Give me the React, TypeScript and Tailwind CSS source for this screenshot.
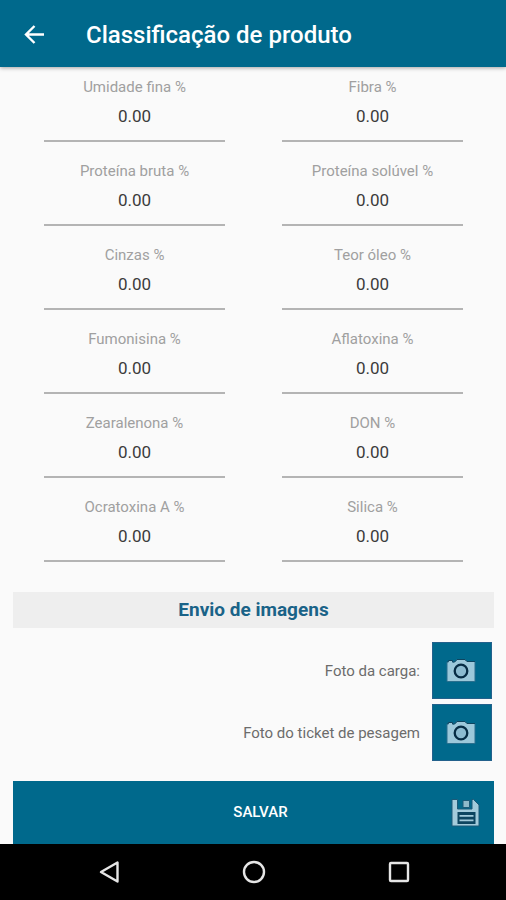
const fields = [
  { id: 'umidade', label: 'Umidade fina %' },
  { id: 'fibra', label: 'Fibra %' },
  { id: 'proteina-bruta', label: 'Proteína bruta %' },
  { id: 'proteina-soluvel', label: 'Proteína solúvel %' },
  { id: 'cinzas', label: 'Cinzas %' },
  { id: 'oleo', label: 'Teor óleo %' },
  { id: 'fumonisina', label: 'Fumonisina %' },
  { id: 'aflatoxina', label: 'Aflatoxina %' },
  { id: 'zearalenona', label: 'Zearalenona %' },
  { id: 'don', label: 'DON %' },
  { id: 'ocratoxina', label: 'Ocratoxina A %' },
  { id: 'silica', label: 'Silica %' },
];

function Field({ id, label }: { id: string; label: string }) {
  return (
    <div className="flex flex-col">
      <label htmlFor={id} className="text-center text-[15px] leading-5 text-[#a0a0a0]">
        {label}
      </label>
      <input
        id={id}
        type="text"
        inputMode="decimal"
        defaultValue="0.00"
        className="h-[45px] w-full rounded-none border-b-2 border-[#b4b4b4] bg-transparent pb-[6px] text-center text-[17px] text-[#3c3c3c] outline-none"
      />
    </div>
  );
}

function CameraIcon() {
  return (
    <svg width="32" height="26" viewBox="0 0 32 26" aria-hidden="true">
      <path
        d="M1 4H2.500V2.500H6.500V4H8.500L11 1.500H19L21 3.500H29V23.500H1Z"
        fill="#9cc8da"
        stroke="#2a6f8e"
        strokeWidth="1"
      />
      <path d="M1.500 4.200L2.500 2.500H6.500V4H8.500L11 1.500H19L21 3.500H29" fill="none" stroke="#0d4560" strokeWidth="1" />
      <circle cx="15" cy="13" r="6.300" fill="#8cbbd0" stroke="#062c44" strokeWidth="2.300" />
    </svg>
  );
}

function SaveIcon() {
  return (
    <svg width="30" height="30" viewBox="0 0 30 30" aria-hidden="true">
      <path
        d="M2 1.500H7.500V11H22V1.500H23.500L29 7V28H2Z"
        fill="#a3cbdb"
        stroke="#1c5a78"
        strokeWidth="1"
      />
      <path d="M13 2.500H19.500V9.500H13Z" fill="#8fb9ca" stroke="#1c5a78" strokeWidth="1" />
      <path d="M7.500 14H25.500V26H7.500Z" fill="#0d4560" />
      <path d="M9.500 17.800H23.500M9.500 22.300H23.500" stroke="#a3cbdb" strokeWidth="1.800" />
    </svg>
  );
}

function PhotoRow({ label }: { label: string }) {
  return (
    <div className="flex items-center justify-end gap-3">
      <span className="text-[15px] leading-5 text-[#6c6c6c]">{label}</span>
      <button
        type="button"
        aria-label={label}
        className="flex h-[57px] w-[60px] items-center justify-center border border-[#23618c] bg-[#00698c]"
      >
        <CameraIcon />
      </button>
    </div>
  );
}

export default function App() {
  return (
    <div className="flex min-h-screen flex-col bg-[#fafafa] font-['Roboto','Noto_Sans',sans-serif]">
      <header className="flex h-[67px] items-center gap-10 bg-[#00698c] px-[22px] pt-[2px] shadow-[0_1px_4px_rgba(0,0,0,0.35)]">
        <button type="button" aria-label="Voltar" className="flex size-6 items-center justify-center">
          <svg width="24" height="24" viewBox="0 0 24 24" fill="none" stroke="#ffffff" strokeWidth="2.400" aria-hidden="true">
            <path d="M22 11.500H4M12.500 3L4 11.500L12.500 20" />
          </svg>
        </button>
        <h1 className="text-2xl font-medium text-white">Classificação de produto</h1>
      </header>

      <main className="flex grow flex-col pt-[10px] pr-3 pl-[13px]">
        <div className="grid grid-cols-2 gap-x-[57px] gap-y-[19px] px-[31px]">
          {fields.map((field) => (
            <Field key={field.id} id={field.id} label={field.label} />
          ))}
        </div>

        <h2 className="mt-[30px] bg-[#eeeeee] text-center text-[19px] leading-[36px] font-bold text-[#1a6388]">
          Envio de imagens
        </h2>

        <div className="mt-[14px] flex flex-col gap-[5px] pr-[2px]">
          <PhotoRow label="Foto da carga:" />
          <PhotoRow label="Foto do ticket de pesagem" />
        </div>

        <button
          type="button"
          className="mt-5 grid h-[63px] grid-cols-[1fr_auto_1fr] items-center bg-[#00698c] px-[14px] text-[15px] font-medium text-white"
        >
          <span />
          <span className="pl-[14px]">SALVAR</span>
          <span className="justify-self-end">
            <SaveIcon />
          </span>
        </button>
      </main>

      <nav className="grid h-14 grid-cols-3 items-center bg-black pr-[34px] pl-9">
        <button type="button" aria-label="Voltar à tela anterior" className="flex justify-center">
          <svg width="24" height="24" viewBox="0 0 24 24" fill="none" stroke="#e6e6e6" strokeWidth="2.400" aria-hidden="true">
            <path d="M20.500 2.500V21.500L4 12Z" strokeLinejoin="round" />
          </svg>
        </button>
        <button type="button" aria-label="Início" className="flex justify-center">
          <svg width="24" height="24" viewBox="0 0 24 24" fill="none" stroke="#e6e6e6" strokeWidth="2.400" aria-hidden="true">
            <circle cx="12" cy="12" r="10" />
          </svg>
        </button>
        <button type="button" aria-label="Recentes" className="flex justify-center">
          <svg width="24" height="24" viewBox="0 0 24 24" fill="none" stroke="#e6e6e6" strokeWidth="2.400" aria-hidden="true">
            <rect x="3" y="3" width="18" height="18" rx="1" />
          </svg>
        </button>
      </nav>
    </div>
  );
}
